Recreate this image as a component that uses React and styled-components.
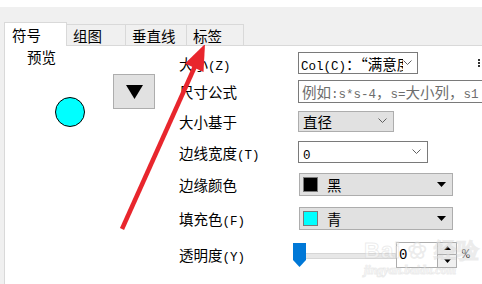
import styled, { createGlobalStyle } from 'styled-components'

const Global = createGlobalStyle`
  html, body { margin: 0; padding: 0; background: #fff; }
  * { box-sizing: border-box; }
`

const Window = styled.div`
  position: relative;
  width: 482px;
  height: 284px;
  overflow: hidden;
  background: #fff;
  padding-top: 7px;
  font-family: "Noto Sans CJK SC", "Noto Sans", sans-serif;
  color: #000;
`

const Frame = styled.div`
  height: 100%;
  background: #f0f0f0;
  padding-left: 4px;
  display: flex;
  flex-direction: column;
`

const TabStrip = styled.div`
  display: flex;
  align-items: flex-end;
  height: 39px;
  flex-shrink: 0;
  border-bottom: 1px solid #d9d9d9;
`

const Tab = styled.div`
  position: relative;
  z-index: 1;
  display: flex;
  align-items: center;
  width: ${p => p.$w}px;
  height: ${p => (p.$active ? 24 : 21)}px;
  margin-bottom: ${p => (p.$active ? -1 : 0)}px;
  padding-left: ${p => (p.$active ? 7 : 6)}px;
  border: 1px solid #d9d9d9;
  border-bottom: none;
  border-left-width: ${p => (p.$active ? 1 : 0)}px;
  background: ${p => (p.$active ? '#fff' : '#f0f0f0')};
  font-size: 14.5px;
  white-space: nowrap;
`

const Panel = styled.div`
  flex: 1;
  display: flex;
  background: #fff;
  border-left: 1px solid #d9d9d9;
`

const PreviewPane = styled.div`
  width: 174px;
  flex-shrink: 0;
  padding: 2px 0 0 22px;
`

const PreviewTitle = styled.div`
  font-size: 14.5px;
  line-height: 18px;
`

const PreviewBody = styled.div`
  display: flex;
  align-items: flex-start;
  margin-top: 8px;
`

const Dot = styled.div`
  width: 30px;
  height: 30px;
  margin: 23px 0 0 28px;
  border-radius: 50%;
  background: #00ffff;
  border: 1px solid #000;
`

const SymbolButton = styled.div`
  width: 42px;
  height: 35px;
  margin-left: 28px;
  display: flex;
  align-items: center;
  justify-content: center;
  background: #e1e1e1;
  border: 1px solid #adadad;
`

const Form = styled.div`
  flex: 1;
  display: flex;
  flex-direction: column;
  padding-top: 3px;
`

const Row = styled.div`
  display: flex;
  align-items: center;
  height: ${p => p.$h}px;
`

const Label = styled.div`
  width: 119px;
  flex-shrink: 0;
  font-size: 14.5px;
  white-space: nowrap;
`

const Key = styled.span`
  font-family: "Liberation Mono", "DejaVu Sans Mono", monospace;
  font-size: 12.5px;
`

const Combo = styled.div`
  flex-shrink: 0;
  display: flex;
  align-items: center;
  width: ${p => p.$w}px;
  height: ${p => p.$h}px;
  padding: 0 ${p => p.$pr ?? 5}px 0 ${p => p.$pl ?? 2}px;
  margin-left: ${p => p.$ml || 0}px;
  border: 1px solid ${p => (p.$flat ? '#adadad' : '#7a7a7a')};
  background: ${p => (p.$flat ? '#e1e1e1' : '#fff')};
`

const ComboText = styled.span`
  flex: 1;
  overflow: hidden;
  white-space: nowrap;
  font-size: 14.5px;
  color: ${p => (p.$muted ? '#6d6d6d' : '#000')};
`

const ColorChip = styled.span`
  width: 15px;
  height: 15px;
  margin-right: 9px;
  flex-shrink: 0;
  background: ${p => p.$c};
  border: 1px solid #7a7a7a;
`

const Stub = styled.span`
  margin-left: 60px;
  width: 2px;
  height: 8px;
  border-left: 2px dotted #333;
`

const Slider = styled.div`
  position: relative;
  width: 103px;
  height: 26px;
  margin-left: -5px;
  display: flex;
  align-items: center;

  &::before {
    content: "";
    position: absolute;
    left: 0;
    right: 0;
    top: 11px;
    height: 4px;
    background: #e7e7e7;
    border: 1px solid #d6d6d6;
  }
`

const Thumb = styled.svg`
  position: relative;
  display: block;
`

const SpinBox = styled.div`
  width: 61px;
  height: 26px;
  display: flex;
  border: 1px solid #adadad;
  background: #fff;
`

const SpinValue = styled.span`
  flex: 1;
  padding-left: 2px;
  font-size: 14px;
  line-height: 24px;
  font-family: "Liberation Mono", monospace;
`

const SpinButtons = styled.div`
  width: 19px;
  display: flex;
  flex-direction: column;
  border-left: 1px solid #adadad;
`

const SpinButton = styled.div`
  flex: 1;
  display: flex;
  align-items: center;
  justify-content: center;
  background: #f0f0f0;
  border-top: ${p => (p.$down ? '1px solid #adadad' : 'none')};
`

const Percent = styled.span`
  margin-left: 5px;
  font-size: 13px;
  font-family: "Liberation Mono", monospace;
`

const Watermark = styled.div`
  position: absolute;
  left: 364px;
  top: 240px;
  pointer-events: none;
  color: rgba(255, 255, 255, 0.4);
  -webkit-text-stroke: 1px rgba(200, 200, 200, 0.35);
  line-height: 1;
`

const WmBig = styled.div`
  font-family: "Liberation Sans", sans-serif;
  font-weight: bold;
  font-size: 22px;
  letter-spacing: 1px;
  white-space: nowrap;
`

const WmSmall = styled.div`
  margin-top: 2px;
  font-family: "Liberation Serif", serif;
  font-style: italic;
  font-weight: bold;
  font-size: 12px;
`

const Overlay = styled.svg`
  position: absolute;
  left: 0;
  top: 0;
  pointer-events: none;
`

const Chevron = () => (
  <svg width="9" height="6" viewBox="0 0 9 6">
    <polyline points="0.5,0.5 4.5,4.5 8.5,0.5" fill="none" stroke="#606060" strokeWidth="1" />
  </svg>
)

const DropTri = ({ w = 9, h = 5 }) => (
  <svg width={w} height={h} viewBox={`0 0 ${w} ${h}`}>
    <polygon points={`0,0 ${w},0 ${w / 2},${h}`} fill="#000" />
  </svg>
)

const UpTri = () => (
  <svg width="7" height="4" viewBox="0 0 7 4">
    <polygon points="0,4 7,4 3.5,0" fill="#000" />
  </svg>
)

export default function App() {
  return (
    <>
      <Global />
      <Window>
        <Frame>
          <TabStrip>
            <Tab $active $w={63}>符号</Tab>
            <Tab $w={59}>组图</Tab>
            <Tab $w={61}>垂直线</Tab>
            <Tab $w={57}>标签</Tab>
          </TabStrip>
          <Panel>
            <PreviewPane>
              <PreviewTitle>预览</PreviewTitle>
              <PreviewBody>
                <Dot />
                <SymbolButton>
                  <DropTri w={17} h={14} />
                </SymbolButton>
              </PreviewBody>
            </PreviewPane>
            <Form>
              <Row $h={28}>
                <Label>大小<Key>(Z)</Key></Label>
                <Combo $w={120} $h={22}>
                  <ComboText><Key>Col(C)</Key>：“满意度”</ComboText>
                  <Chevron />
                </Combo>
                <Stub />
              </Row>
              <Row $h={29}>
                <Label>尺寸公式</Label>
                <Combo $w={200} $h={23} $pl={3}>
                  <ComboText $muted>例如<Key>:s*s-4</Key>，<Key>s=</Key>大小列，<Key>s1</Key></ComboText>
                </Combo>
              </Row>
              <Row $h={30}>
                <Label>大小基于</Label>
                <Combo $flat $w={96} $h={21} $pl={4} $pr={6}>
                  <ComboText>直径</ComboText>
                  <Chevron />
                </Combo>
              </Row>
              <Row $h={32}>
                <Label>边线宽度<Key>(T)</Key></Label>
                <Combo $w={130} $h={22} $pl={4} $pr={6}>
                  <ComboText><Key>0</Key></ComboText>
                  <Chevron />
                </Combo>
              </Row>
              <Row $h={32}>
                <Label>边缘颜色</Label>
                <Combo $flat $w={154} $h={23} $ml={1} $pl={3} $pr={6}>
                  <ColorChip $c="#000" />
                  <ComboText>黑</ComboText>
                  <DropTri />
                </Combo>
              </Row>
              <Row $h={36}>
                <Label>填充色<Key>(F)</Key></Label>
                <Combo $flat $w={154} $h={23} $ml={1} $pl={3} $pr={6}>
                  <ColorChip $c="#00ffff" />
                  <ComboText>青</ComboText>
                  <DropTri />
                </Combo>
              </Row>
              <Row $h={37}>
                <Label>透明度<Key>(Y)</Key></Label>
                <Slider>
                  <Thumb width="13" height="24" viewBox="0 0 13 24">
                    <path d="M0 0 H13 V17 L6.5 24 L0 17 Z" fill="#0078d7" />
                  </Thumb>
                </Slider>
                <SpinBox>
                  <SpinValue>0</SpinValue>
                  <SpinButtons>
                    <SpinButton><UpTri /></SpinButton>
                    <SpinButton $down><DropTri w={7} h={4} /></SpinButton>
                  </SpinButtons>
                </SpinBox>
                <Percent>%</Percent>
              </Row>
            </Form>
          </Panel>
        </Frame>
        <Watermark>
          <WmBig>Bai ✿ 经验</WmBig>
          <WmSmall>jingyan.baidu.com</WmSmall>
        </Watermark>
        <Overlay width="482" height="284" viewBox="0 0 482 284">
          <line x1="122" y1="229" x2="196" y2="64" stroke="#e8262d" strokeWidth="4.5" />
          <polygon points="205,44 185,63.5 203.5,72" fill="#e8262d" />
        </Overlay>
      </Window>
    </>
  )
}
